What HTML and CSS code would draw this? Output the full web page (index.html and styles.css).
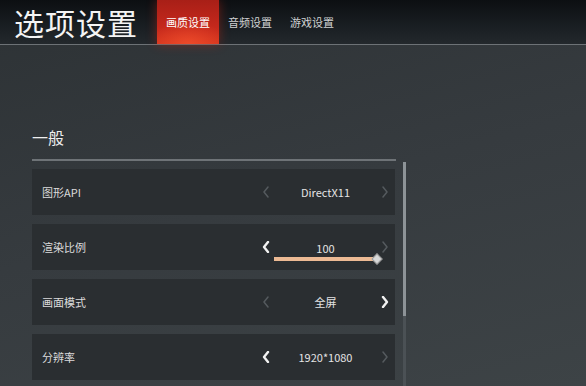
FILE: index.html
```html
<!DOCTYPE html>
<html lang="zh">
<head>
  <meta charset="UTF-8" />
  <meta name="viewport" content="width=device-width, initial-scale=1.0"/>
  <title>选项设置</title>
  <link rel="stylesheet" href="styles.css">
</head>
<body>

  <header class="topbar">
    <h1 class="title">选项设置</h1>
    <nav class="tabs">
      <a class="tab active">画质设置</a>
      <a class="tab">音频设置</a>
      <a class="tab">游戏设置</a>
    </nav>
  </header>

  <main class="content">
    <div class="panel">
      <section class="section">
        <h2 class="section-title">一般</h2>

        <div class="rows">
          <div class="row">
            <span class="label">图形API</span>
            <div class="picker">
              <svg class="arrow off" viewBox="0 0 8 12"><path d="M6 1 L2 6 L6 11"/></svg>
              <span class="value">DirectX11</span>
              <svg class="arrow off" viewBox="0 0 8 12"><path d="M2 1 L6 6 L2 11"/></svg>
            </div>
          </div>

          <div class="row">
            <span class="label">渲染比例</span>
            <div class="picker">
              <svg class="arrow on" viewBox="0 0 8 12"><path d="M6 1 L2 6 L6 11"/></svg>
              <div class="value slider-value">
                <span>100</span>
                <div class="track">
                  <div class="fill" style="width: 100%;"></div>
                  <span class="knob"></span>
                </div>
              </div>
              <svg class="arrow off" viewBox="0 0 8 12"><path d="M2 1 L6 6 L2 11"/></svg>
            </div>
          </div>

          <div class="row">
            <span class="label">画面模式</span>
            <div class="picker">
              <svg class="arrow off" viewBox="0 0 8 12"><path d="M6 1 L2 6 L6 11"/></svg>
              <span class="value">全屏</span>
              <svg class="arrow on" viewBox="0 0 8 12"><path d="M2 1 L6 6 L2 11"/></svg>
            </div>
          </div>

          <div class="row">
            <span class="label">分辨率</span>
            <div class="picker">
              <svg class="arrow on" viewBox="0 0 8 12"><path d="M6 1 L2 6 L6 11"/></svg>
              <span class="value">1920*1080</span>
              <svg class="arrow off" viewBox="0 0 8 12"><path d="M2 1 L6 6 L2 11"/></svg>
            </div>
          </div>
        </div>
      </section>

      <div class="scrollbar">
        <div class="thumb"></div>
      </div>
    </div>
  </main>

</body>
</html>
```

FILE: styles.css
```css
html, body {
  height: 100%;
}
body {
  margin: 0;
  font-family: "Noto Sans CJK SC", "Noto Sans", sans-serif;
  background: linear-gradient(165deg, #2d3235 0%, #363b3f 50%, #3d4346 100%);
  color: #e6e6e6;
  overflow: hidden;
}
.topbar {
  height: 44px;
  display: flex;
  align-items: stretch;
  background: linear-gradient(#0c0f12, #1c2125 70%, #23282c);
  border-bottom: 1px solid #6d7276;
}
.title {
  margin: 0;
  padding-left: 14px;
  width: 143px;
  font-size: 30px;
  font-weight: 400;
  line-height: 44px;
  letter-spacing: 1px;
  color: #f4f4f4;
}
.tabs {
  display: flex;
}
.tab {
  width: 62px;
  text-align: center;
  font-size: 11px;
  line-height: 44px;
  color: #d0d2d3;
}
.tab.active {
  color: #fff;
  background:
    radial-gradient(ellipse 60% 55% at 50% 100%, rgba(255, 90, 50, 0.55), rgba(255, 90, 50, 0) 100%),
    linear-gradient(#a81f17, #c4281c 60%, #d8371f);
  box-shadow: 0 0 10px rgba(210, 40, 20, 0.45);
}
.content {
  padding-left: 32px;
}
.panel {
  display: flex;
  align-items: flex-start;
}
.section {
  width: 364px;
}
.section-title {
  margin: 0;
  padding: 82px 0 12px;
  font-size: 16px;
  font-weight: 400;
  line-height: 20px;
  color: #eeeeee;
  border-bottom: 2px solid #6e7377;
}
.rows {
  margin-top: 8px;
  display: flex;
  flex-direction: column;
  gap: 9px;
  width: 363px;
}
.row {
  height: 46px;
  display: flex;
  align-items: center;
  justify-content: space-between;
  padding: 0 2px 0 10px;
  background: #2a2e31;
}
.label {
  font-size: 11px;
  color: #dcdcdc;
}
.picker {
  width: 135px;
  height: 100%;
  display: grid;
  grid-template-columns: 16px 1fr 16px;
  align-items: center;
}
.arrow {
  width: 8px;
  height: 12px;
  justify-self: center;
  fill: none;
  stroke-linecap: round;
  stroke-linejoin: round;
}
.arrow.on {
  stroke: #f2f2f2;
  stroke-width: 2.4;
}
.arrow.off {
  stroke: #555a5e;
  stroke-width: 1.5;
}
.value {
  text-align: center;
  font-size: 11px;
  color: #e4e4e4;
}
.slider-value {
  display: flex;
  flex-direction: column;
  gap: 2px;
  padding-top: 8px;
  line-height: 14px;
}
.track {
  position: relative;
  height: 4px;
  background: #4a4f52;
}
.fill {
  height: 100%;
  background: #ecba94;
}
.knob {
  position: absolute;
  right: -4px;
  top: -2px;
  width: 6px;
  height: 6px;
  background: #d8d8d8;
  border: 1px solid #9a9a9a;
  transform: rotate(45deg);
}
.scrollbar {
  margin: 117px 0 0 7px;
  width: 3px;
  height: 230px;
  background: #4b5155;
}
.thumb {
  height: 154px;
  background: #8d9397;
}
```
